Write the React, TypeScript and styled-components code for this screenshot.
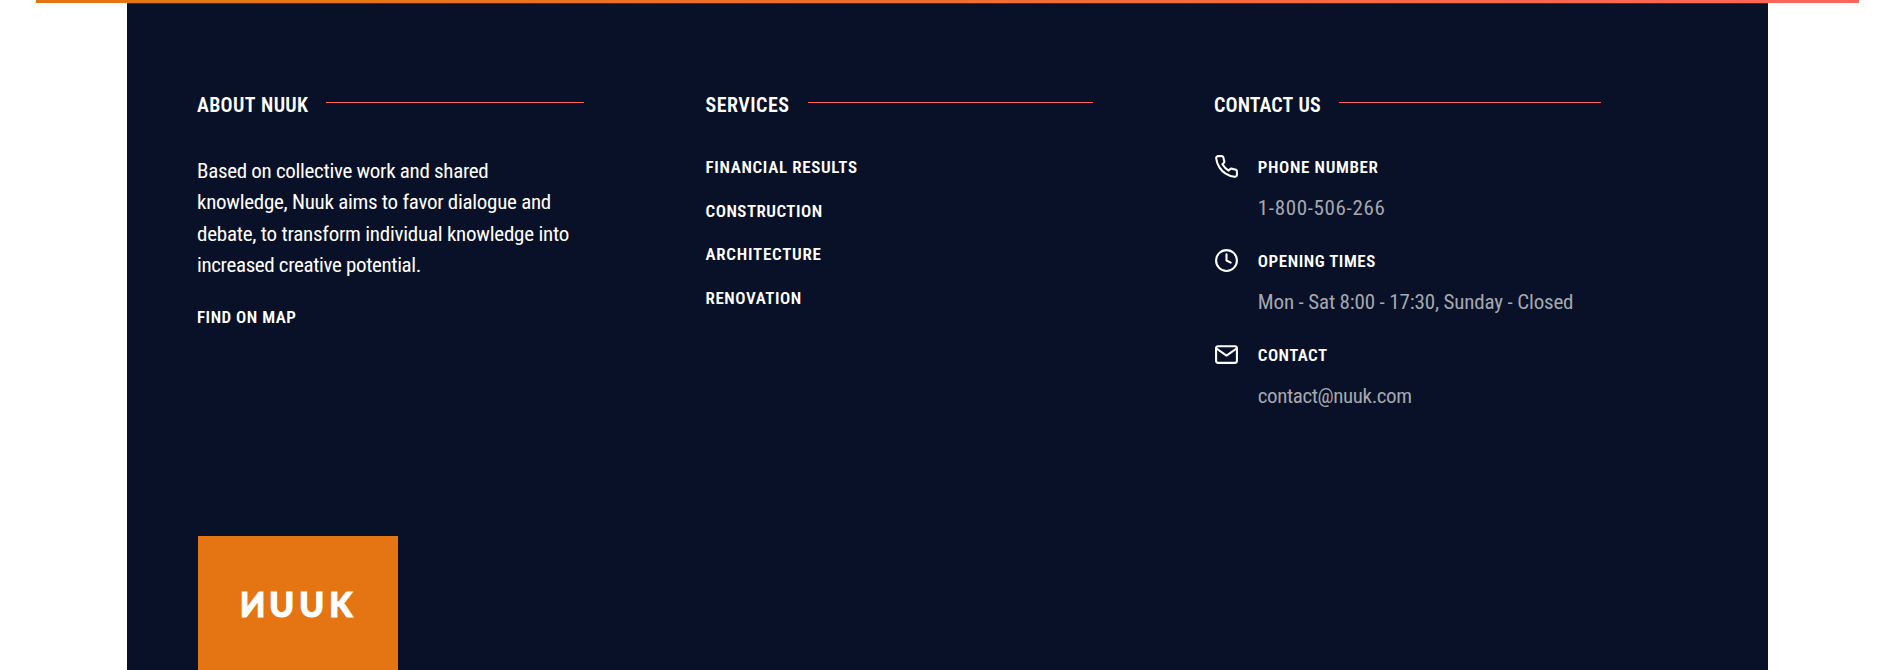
import React from 'react';
import styled, { createGlobalStyle } from 'styled-components';

const Global = createGlobalStyle`
  *, *::before, *::after { box-sizing: border-box; }
  html, body { margin: 0; background: #fff; }
  body { font-family: Roboto, "Open Sans", sans-serif; font-stretch: 75%; color: #fff; overflow: hidden; }
  a { color: inherit; text-decoration: none; }
`;

const Page = styled.div`
  display: flex;
  flex-direction: column;
  align-items: center;
  width: 1895px;
  height: 670px;
  overflow: hidden;
`;

const GradientBar = styled.div`
  flex: none;
  width: 1823px;
  height: 3px;
  background: linear-gradient(90deg, #e57412 0%, #e57412 12%, #ff655c 100%);
`;

const Footer = styled.footer`
  flex: 1;
  display: flex;
  flex-direction: column;
  justify-content: space-between;
  width: 1641px;
  padding: 86px 0 0 70px;
  border-top: 1px solid #2b3042;
  background: #091128;
`;

const Columns = styled.div`
  display: grid;
  grid-template-columns: repeat(3, 387px);
  column-gap: 121.5px;
`;

const Column = styled.section`
  display: flex;
  flex-direction: column;
`;

const HeadingRow = styled.div`
  display: flex;
  height: 30px;
  margin-bottom: 36px;
`;

const Heading = styled.h2<{ $track: number; $width: number }>`
  flex: none;
  width: ${p => p.$width}px;
  margin: 0;
  font-size: 20px;
  font-weight: 600;
  line-height: 30px;
  letter-spacing: ${p => p.$track}px;
  word-spacing: 1px;
  white-space: nowrap;
`;

const Rule = styled.span`
  flex: 1;
  height: 1px;
  margin-top: 12px;
  background: #ff655c;
`;

const Paragraph = styled.p`
  margin: 0;
  font-size: 21px;
  line-height: 31.3px;
`;

const Line = styled.span<{ $track: number }>`
  display: block;
  letter-spacing: ${p => p.$track}px;
  white-space: nowrap;
`;

const Label = styled.span<{ $track: number }>`
  font-size: 17px;
  font-weight: 600;
  line-height: 28px;
  letter-spacing: ${p => p.$track}px;
  white-space: nowrap;
`;

const MapLink = styled.a`
  display: flex;
  margin-top: 22px;
`;

const LinkList = styled.ul`
  display: flex;
  flex-direction: column;
  gap: 15.6px;
  margin: -3px 0 0;
  padding: 0;
  list-style: none;

  li { display: flex; }
`;

const ContactList = styled.div`
  display: flex;
  flex-direction: column;
  gap: 22px;
  margin-top: -3px;
`;

const ContactItem = styled.div`
  display: grid;
  grid-template-columns: 25px 1fr;
  column-gap: 18.8px;
  row-gap: 11px;
  height: 72px;
  grid-template-rows: 28px 32px;
`;

const Icon = styled.svg`
  display: block;
  width: 25px;
  height: 25px;
  margin-top: 1px;
  fill: none;
  stroke: #fff;
  stroke-width: 2;
  stroke-linecap: round;
  stroke-linejoin: round;
`;

const Value = styled.span<{ $track: number }>`
  grid-column: 2;
  color: #a5a8af;
  font-size: 21px;
  font-weight: 400;
  line-height: 32px;
  letter-spacing: ${p => p.$track}px;
  white-space: nowrap;
`;

const Logo = styled.div`
  display: flex;
  width: 200px;
  height: 134px;
  margin-left: 1px;
  padding: 47px 0 0 40px;
  background: #e57412;
  font-family: Lato, sans-serif;
  font-stretch: 100%;
  font-size: 34px;
  font-weight: 900;
  line-height: 42px;
  -webkit-text-stroke: 1.2px #fff;
`;

const Letter = styled.span<{ $width: number; $mirror?: boolean }>`
  display: block;
  flex: none;
  width: ${p => p.$width}px;
  text-align: center;
  transform: ${p => (p.$mirror ? 'scaleX(-0.96)' : 'scaleX(0.98)')};
`;

const links = [
  { text: 'FINANCIAL RESULTS', track: 0.66 },
  { text: 'CONSTRUCTION', track: 0.48 },
  { text: 'ARCHITECTURE', track: 0.74 },
  { text: 'RENOVATION', track: 0.56 },
];

const story = [
  { text: 'Based on collective work and shared', track: -0.31 },
  { text: 'knowledge, Nuuk aims to favor dialogue and', track: -0.28 },
  { text: 'debate, to transform individual knowledge into', track: -0.24 },
  { text: 'increased creative potential.', track: -0.36 },
];

const PhoneIcon = () => (
  <Icon viewBox="0 0 24 24">
    <path d="M22 16.92v3a2 2 0 0 1-2.18 2 19.79 19.79 0 0 1-8.63-3.07 19.5 19.5 0 0 1-6-6 19.79 19.79 0 0 1-3.07-8.67A2 2 0 0 1 4.11 2h3a2 2 0 0 1 2 1.72 12.84 12.84 0 0 0 .7 2.81 2 2 0 0 1-.45 2.11L8.09 9.91a16 16 0 0 0 6 6l1.27-1.27a2 2 0 0 1 2.11-.45 12.84 12.84 0 0 0 2.81.7A2 2 0 0 1 22 16.92z" />
  </Icon>
);

const ClockIcon = () => (
  <Icon viewBox="0 0 24 24">
    <circle cx="12" cy="12" r="10" />
    <polyline points="12 6 12 12 16 14" />
  </Icon>
);

const MailIcon = () => (
  <Icon viewBox="0 0 24 24">
    <path d="M4 4h16c1.1 0 2 .9 2 2v12c0 1.1-.9 2-2 2H4c-1.1 0-2-.9-2-2V6c0-1.1.9-2 2-2z" />
    <polyline points="22,6 12,13 2,6" />
  </Icon>
);

const contacts = [
  { icon: <PhoneIcon />, title: 'PHONE NUMBER', track: 0.62, value: '1-800-506-266', valueTrack: 0.64 },
  { icon: <ClockIcon />, title: 'OPENING TIMES', track: 0.54, value: 'Mon - Sat 8:00 - 17:30, Sunday - Closed', valueTrack: -0.16 },
  { icon: <MailIcon />, title: 'CONTACT', track: 0.4, value: 'contact@nuuk.com', valueTrack: -0.4 },
];

export default function App() {
  return (
    <Page>
      <Global />
      <GradientBar />
      <Footer>
        <Columns>
          <Column>
            <HeadingRow>
              <Heading $track={0.3} $width={129}>ABOUT NUUK</Heading>
              <Rule />
            </HeadingRow>
            <Paragraph>
              {story.map(l => <Line key={l.text} $track={l.track}>{l.text}</Line>)}
            </Paragraph>
            <MapLink href="#"><Label $track={0.5}>FIND ON MAP</Label></MapLink>
          </Column>
          <Column>
            <HeadingRow>
              <Heading $track={0.5} $width={102.5}>SERVICES</Heading>
              <Rule />
            </HeadingRow>
            <LinkList>
              {links.map(l => (
                <li key={l.text}><a href="#"><Label $track={l.track}>{l.text}</Label></a></li>
              ))}
            </LinkList>
          </Column>
          <Column>
            <HeadingRow>
              <Heading $track={0.1} $width={125}>CONTACT US</Heading>
              <Rule />
            </HeadingRow>
            <ContactList>
              {contacts.map(c => (
                <ContactItem key={c.title}>
                  {c.icon}
                  <Label $track={c.track}>{c.title}</Label>
                  <Value $track={c.valueTrack}>{c.value}</Value>
                </ContactItem>
              ))}
            </ContactList>
          </Column>
        </Columns>
        <Logo>
          <Letter $width={29} $mirror>N</Letter>
          <Letter $width={29.5}>U</Letter>
          <Letter $width={29.5}>U</Letter>
          <Letter $width={29.5}>K</Letter>
        </Logo>
      </Footer>
    </Page>
  );
}
